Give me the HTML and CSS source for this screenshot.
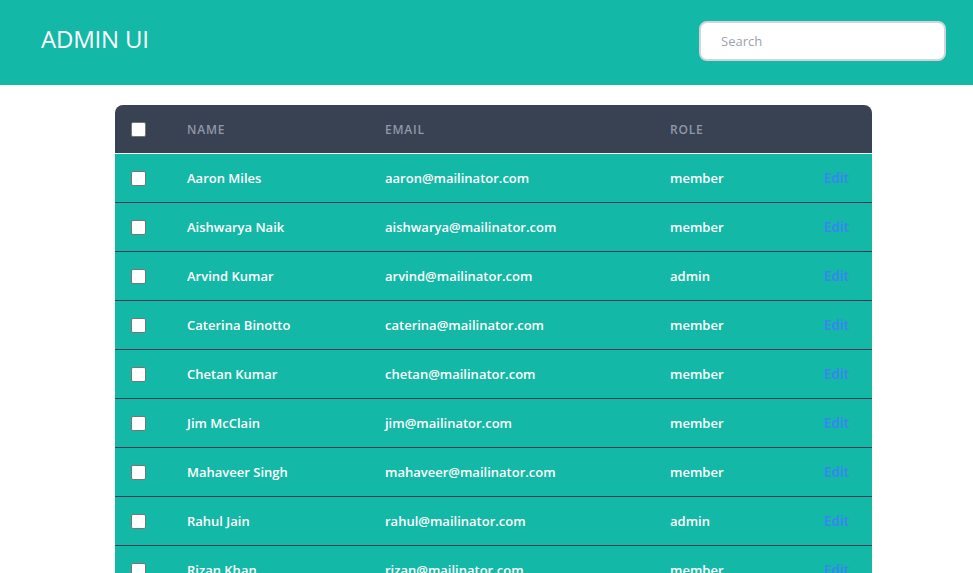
FILE: index.html
```html
<!DOCTYPE html>
<html lang="en">
<head>
<meta charset="utf-8">
<title>Admin UI</title>
<link rel="stylesheet" href="styles.css">
</head>
<body>
<header class="topbar">
  <h1 class="brand">ADMIN UI</h1>
  <input class="search" type="text" placeholder="Search">
</header>
<main class="content">
  <div class="table">
    <div class="row head">
      <div class="cell check"><span class="box"></span></div>
      <div class="cell">Name</div>
      <div class="cell">Email</div>
      <div class="cell">Role</div>
      <div class="cell"></div>
    </div>
    <div class="row"><div class="cell check"><span class="box"></span></div><div class="cell">Aaron Miles</div><div class="cell">aaron@mailinator.com</div><div class="cell">member</div><div class="cell edit">Edit</div></div>
    <div class="row"><div class="cell check"><span class="box"></span></div><div class="cell">Aishwarya Naik</div><div class="cell">aishwarya@mailinator.com</div><div class="cell">member</div><div class="cell edit">Edit</div></div>
    <div class="row"><div class="cell check"><span class="box"></span></div><div class="cell">Arvind Kumar</div><div class="cell">arvind@mailinator.com</div><div class="cell">admin</div><div class="cell edit">Edit</div></div>
    <div class="row"><div class="cell check"><span class="box"></span></div><div class="cell">Caterina Binotto</div><div class="cell">caterina@mailinator.com</div><div class="cell">member</div><div class="cell edit">Edit</div></div>
    <div class="row"><div class="cell check"><span class="box"></span></div><div class="cell">Chetan Kumar</div><div class="cell">chetan@mailinator.com</div><div class="cell">member</div><div class="cell edit">Edit</div></div>
    <div class="row"><div class="cell check"><span class="box"></span></div><div class="cell">Jim McClain</div><div class="cell">jim@mailinator.com</div><div class="cell">member</div><div class="cell edit">Edit</div></div>
    <div class="row"><div class="cell check"><span class="box"></span></div><div class="cell">Mahaveer Singh</div><div class="cell">mahaveer@mailinator.com</div><div class="cell">member</div><div class="cell edit">Edit</div></div>
    <div class="row"><div class="cell check"><span class="box"></span></div><div class="cell">Rahul Jain</div><div class="cell">rahul@mailinator.com</div><div class="cell">admin</div><div class="cell edit">Edit</div></div>
    <div class="row"><div class="cell check"><span class="box"></span></div><div class="cell">Rizan Khan</div><div class="cell">rizan@mailinator.com</div><div class="cell">member</div><div class="cell edit">Edit</div></div>
  </div>
</main>
</body>
</html>
```
FILE: styles.css
```css
* { box-sizing: border-box; }
html, body { margin: 0; padding: 0; background: #ffffff; }
body { font-family: "Open Sans", "Noto Sans", sans-serif; }

.topbar {
  height: 85px;
  background: #14b8a6;
  display: flex;
  align-items: center;
  justify-content: space-between;
  padding: 0 27px 0 41px;
}
.brand {
  margin: 0;
  font-size: 24px;
  font-weight: 400;
  color: #ffffff;
  letter-spacing: -0.2px;
  padding-bottom: 8px;
}
.search {
  width: 247px;
  height: 40px;
  border: 2px solid #d1d5db;
  border-radius: 8px;
  background: #ffffff;
  padding: 0 20px;
  font-family: inherit;
  font-size: 13px;
  color: #374151;
  outline: none;
  margin-bottom: 4px;
}
.search::placeholder { color: #9ca3af; }

.content {
  padding: 20px 0 0 115px;
}
.table {
  width: 757px;
  border-radius: 8px 8px 0 0;
  overflow: hidden;
}
.row {
  display: grid;
  grid-template-columns: 72px 198px 285px 154px 1fr;
  align-items: center;
  height: 49px;
  background: #14b8a6;
  border-bottom: 1px solid #363b52;
  color: #ffffff;
  font-size: 13px;
  font-weight: 600;
}
.row.head {
  background: #394253;
  border-bottom: 1px solid #f3f4f6;
  color: #8f98a8;
  font-size: 12px;
  text-transform: uppercase;
  letter-spacing: 0.8px;
}
.cell { white-space: nowrap; }
.check { padding-left: 16px; display: flex; align-items: center; }
.box {
  display: block;
  width: 15px;
  height: 15px;
  background: #ffffff;
  border: 1px solid #767676;
  border-radius: 2px;
}
.edit { color: #3b82f6; font-size: 13.5px; }
```
